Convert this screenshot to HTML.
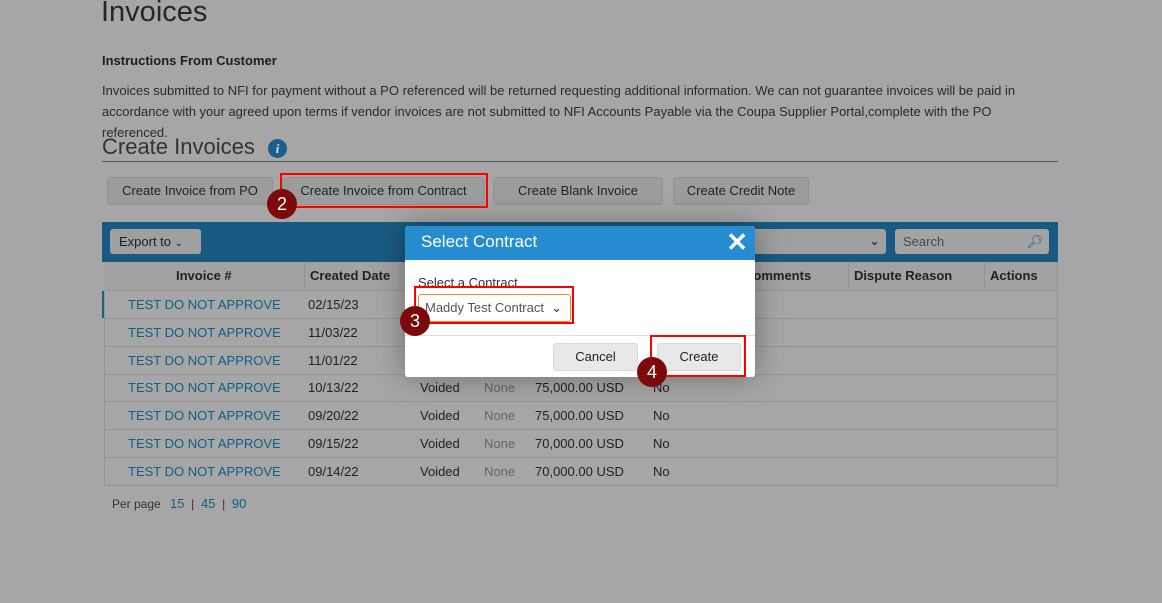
<!DOCTYPE html>
<html><head><meta charset="utf-8"><style>
*{box-sizing:border-box;margin:0;padding:0}
body{width:1162px;height:603px;overflow:hidden;background:#a6a6a6;font-family:"Liberation Sans",Arial,sans-serif;position:relative;color:#222}
.a{position:absolute;white-space:nowrap}
.btn{position:absolute;top:177px;height:28px;background:#9c9c9c;border:1px solid #929292;border-radius:3px;font-size:13px;color:#222;text-align:center;line-height:26px}
.row{position:absolute;left:104px;width:953px;height:28px;border-bottom:1px solid #959595;font-size:13px;line-height:27px}
.row span{position:absolute}
.lk{color:#0f5f87;left:24px}
.circ{position:absolute;width:30px;height:30px;border-radius:50%;background:#7d0a0a;color:#fff;font-size:18px;text-align:center;line-height:30px}
.red{position:absolute;border:2px solid #f00}
</style></head><body>
<div class="a" style="left:101px;top:-4px;font-size:29px;color:#262626">Invoices</div>
<div class="a" style="left:102px;top:53px;font-size:13px;font-weight:bold;color:#1e1e1e">Instructions From Customer</div>
<div class="a" style="left:102px;top:80px;font-size:13px;line-height:21px;color:#2a2a2a;white-space:normal;width:925px">Invoices submitted to NFI for payment without a PO referenced will be returned requesting additional information. We can not guarantee invoices will be paid in accordance with your agreed upon terms if vendor invoices are not submitted to NFI Accounts Payable via the Coupa Supplier Portal,complete with the PO referenced.</div>
<div class="a" style="left:102px;top:134px;font-size:22px;color:#333">Create Invoices</div>
<div class="a" style="left:268px;top:139px;width:19px;height:19px;border-radius:50%;background:#1b5f8d;color:#ddd;font:italic bold 13px 'Liberation Serif',serif;text-align:center;line-height:19px">i</div>
<div class="a" style="left:102px;top:161px;width:956px;height:1px;background:#555"></div>
<div class="btn" style="left:107px;width:166px">Create Invoice from PO</div>
<div class="btn" style="left:282px;width:203px">Create Invoice from Contract</div>
<div class="btn" style="left:493px;width:170px">Create Blank Invoice</div>
<div class="btn" style="left:673px;width:136px">Create Credit Note</div>
<div class="red" style="left:280px;top:173px;width:208px;height:35px"></div>
<div class="circ" style="left:267px;top:189px">2</div>
<div class="a" style="left:102px;top:222px;width:956px;height:40px;background:#1a5a82"></div>
<div class="a" style="left:110px;top:229px;width:91px;height:25px;background:#9f9f9f;border-radius:3px;font-size:13px;line-height:25px;padding-left:9px;color:#1e1e1e">Export to <span style="font-size:10px">⌄</span></div>
<div class="a" style="left:740px;top:229px;width:146px;height:25px;background:#9f9f9f;border-radius:3px;font-size:13px;text-align:right;padding-right:6px;line-height:24px">⌄</div>
<div class="a" style="left:895px;top:229px;width:154px;height:25px;background:#a3a3a3;border-radius:3px;font-size:13px;line-height:25px;padding-left:8px;color:#4a4a4a">Search<span style="position:absolute;right:6px;top:0;color:#1a5f90">🔎︎</span></div>
<div class="a" style="left:104px;top:262px;width:953px;height:29px;background:#a2a2a2;border-bottom:1px solid #959595;font-size:13px;font-weight:bold;line-height:27px;color:#222">
<span class="a" style="left:72px">Invoice #</span><span class="a" style="left:200px;top:0;width:1px;height:28px;background:#949494"></span>
<span class="a" style="left:206px">Created Date</span>
<span class="a" style="left:744px;width:1px;height:28px;background:#949494;top:0"></span><span class="a" style="left:750px">Dispute Reason</span>
<span class="a" style="left:880px;width:1px;height:28px;background:#949494;top:0"></span><span class="a" style="left:886px">Actions</span>
<span class="a" style="left:640px">Comments</span></div>
<div class="a" style="left:102px;top:291px;width:3px;height:27px;background:#1c5f88"></div>
<div class="a" style="left:104px;top:291px;width:1px;height:195px;background:#959595"></div>
<div class="a" style="left:1057px;top:262px;width:1px;height:224px;background:#959595"></div>
<div class="row" style="top:291px"><span class="lk">TEST DO NOT APPROVE</span><span style="left:204px">02/15/23</span></div>
<div class="row" style="top:319px"><span class="lk">TEST DO NOT APPROVE</span><span style="left:204px">11/03/22</span></div>
<div class="row" style="top:347px"><span class="lk">TEST DO NOT APPROVE</span><span style="left:204px">11/01/22</span></div>
<div class="row" style="top:374px"><span class="lk">TEST DO NOT APPROVE</span><span style="left:204px">10/13/22</span><span style="left:316px">Voided</span><span style="left:380px;color:#666">None</span><span style="left:431px">75,000.00 USD</span><span style="left:549px">No</span></div>
<div class="row" style="top:402px"><span class="lk">TEST DO NOT APPROVE</span><span style="left:204px">09/20/22</span><span style="left:316px">Voided</span><span style="left:380px;color:#666">None</span><span style="left:431px">75,000.00 USD</span><span style="left:549px">No</span></div>
<div class="row" style="top:430px"><span class="lk">TEST DO NOT APPROVE</span><span style="left:204px">09/15/22</span><span style="left:316px">Voided</span><span style="left:380px;color:#666">None</span><span style="left:431px">70,000.00 USD</span><span style="left:549px">No</span></div>
<div class="row" style="top:458px"><span class="lk">TEST DO NOT APPROVE</span><span style="left:204px">09/14/22</span><span style="left:316px">Voided</span><span style="left:380px;color:#666">None</span><span style="left:431px">70,000.00 USD</span><span style="left:549px">No</span></div>
<div class="a" style="left:112px;top:496px;font-size:12px;color:#333">Per page <span style="color:#0f5f87;font-size:13px;margin-left:6px">15</span> &nbsp;|&nbsp; <span style="color:#0f5f87;font-size:13px">45</span> &nbsp;|&nbsp; <span style="color:#0f5f87;font-size:13px">90</span></div>
<!-- modal -->
<div class="a" style="left:405px;top:226px;width:350px;height:151px;background:#fff;border-radius:3px;box-shadow:0 0 30px rgba(0,0,0,.35);overflow:hidden">
<div style="height:34px;background:#268dd0;color:#fff;font-size:17px;line-height:32px;padding-left:16px">Select Contract<span style="position:absolute;right:7px;top:0;font-size:26px;font-weight:bold">✕</span></div>
<div class="a" style="left:13px;top:49px;font-size:13px;color:#333">Select a Contract</div>
<div class="a" style="left:13px;top:68px;width:153px;height:28px;border:1px solid #f08a2c;border-radius:3px;font-size:13px;color:#555;line-height:26px;padding-left:6px">Maddy Test Contract <span style="position:absolute;right:8px;font-size:13px;color:#333">⌄</span></div>
<div class="a" style="left:0;top:109px;width:350px;height:1px;background:#ddd"></div>
<div class="a" style="left:148px;top:117px;width:85px;height:28px;background:#e8e8e8;border:1px solid #d8d8d8;border-radius:3px;font-size:13px;text-align:center;line-height:26px">Cancel</div>
<div class="a" style="left:252px;top:117px;width:84px;height:28px;background:#e8e8e8;border:1px solid #d8d8d8;border-radius:3px;font-size:13px;text-align:center;line-height:26px">Create</div>
</div>
<div class="red" style="left:414px;top:286px;width:160px;height:38px"></div>
<div class="circ" style="left:400px;top:306px">3</div>
<div class="red" style="left:650px;top:335px;width:96px;height:42px"></div>
<div class="circ" style="left:637px;top:357px">4</div>
</body></html>
